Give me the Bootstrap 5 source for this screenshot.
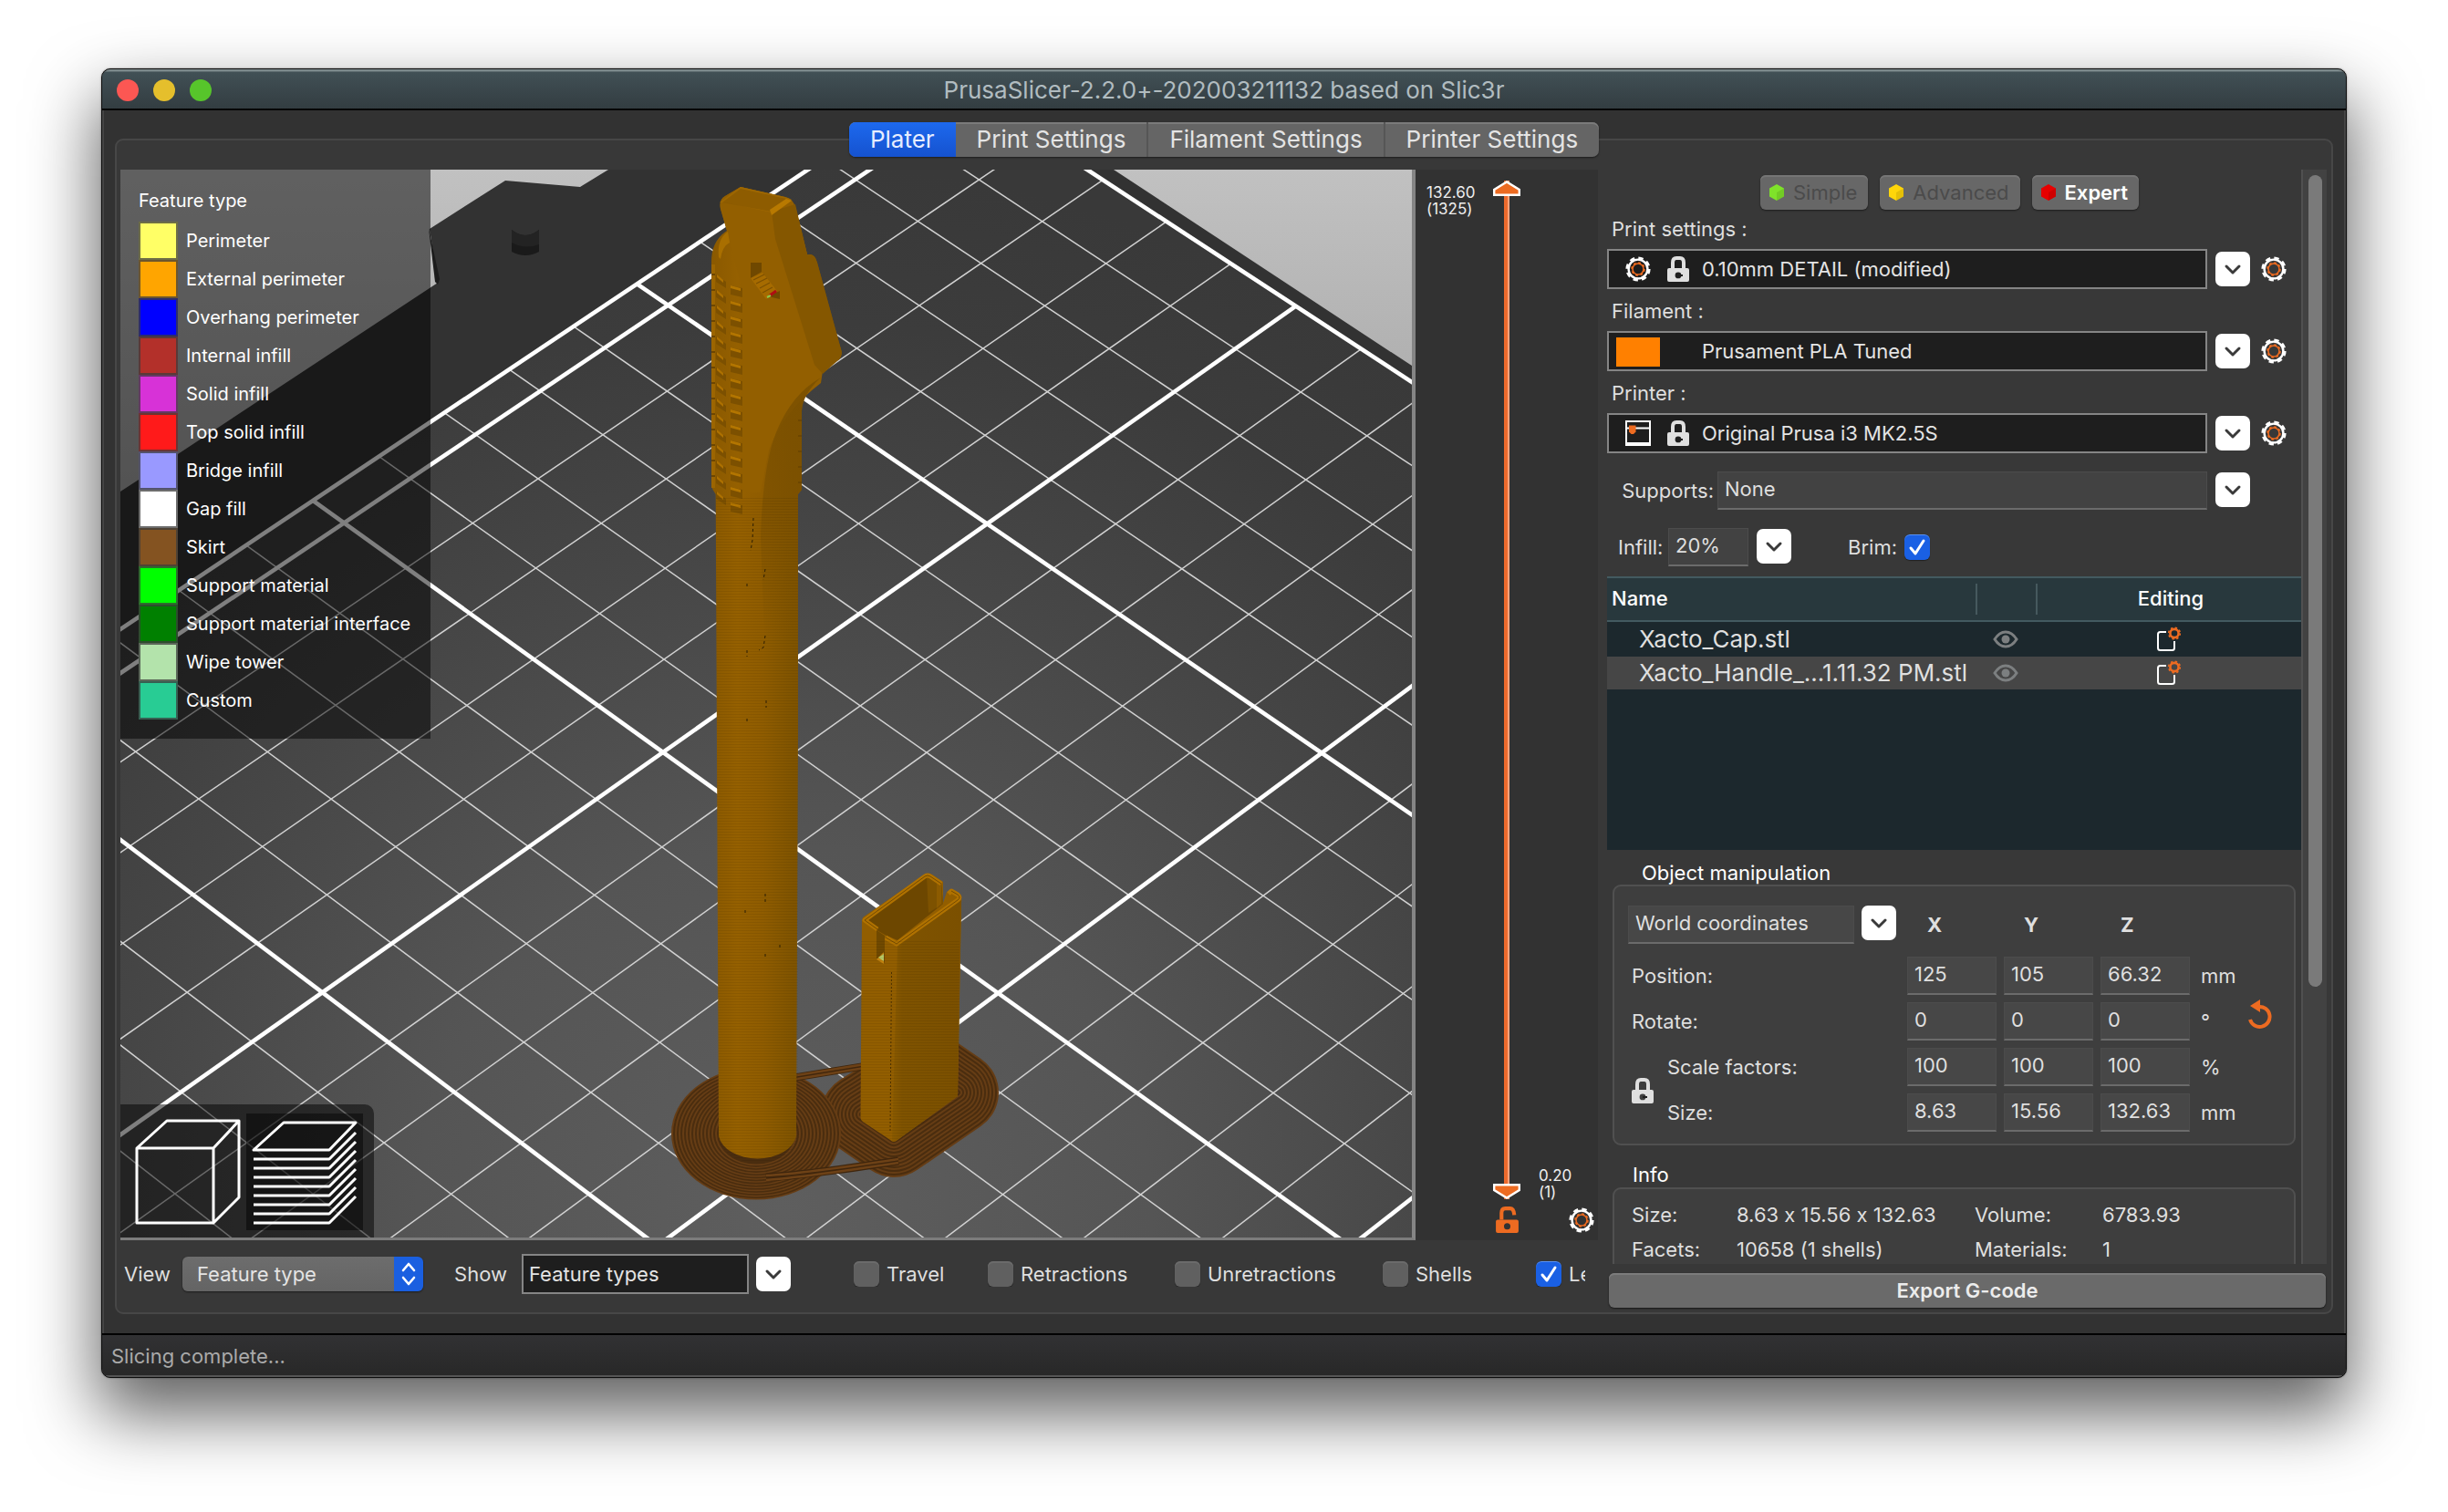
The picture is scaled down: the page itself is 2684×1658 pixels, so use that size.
<!DOCTYPE html>
<html lang="en" data-bs-theme="dark">
<head>
<meta charset="utf-8">
<meta name="viewport" content="width=device-width, initial-scale=1">
<title>PrusaSlicer</title>
<link href="https://cdn.jsdelivr.net/npm/bootstrap@5.3.0/dist/css/bootstrap.min.css" rel="stylesheet">
<style>
:root{--orange:#ed6b21;--ink:#dfdfdf;--base:22px;--big:26px}
body{background:#fff;font-family:Inter,"Noto Sans",sans-serif;font-variant-ligatures:no-contextual;font-size:var(--base);line-height:26px;color:var(--ink);padding:75px 111px 147px;min-height:100vh}
label,button,select,input{font-size:inherit;font-variant-ligatures:inherit}
.app-window{background:#323232;border:1px solid #0c0c0c;border-radius:10px;overflow:hidden;box-shadow:0 0 2px rgba(0,0,0,.5),0 36px 74px 4px rgba(0,0,0,.62),inset 0 0 0 2px #555}
.titlebar{height:45px;padding-top:2px;background:linear-gradient(#7d8a8c 0,#7d8a8c 2px,#415055 3px,#333d41);border-bottom:2px solid #050505}
.titlebar h1{font-size:var(--big);font-weight:400;color:#b1bcc0}
.lights{width:130px;padding-left:16px;gap:16px}
.lights button{width:24px;height:24px;border:0;border-radius:50%;padding:0}
.l-red{background:#fc5753}.l-yellow{background:#e5bf2c}.l-green{background:#57c52b}
.work{padding:13px 12px 21px;border-left:2px solid #454545;border-right:2px solid #454545;margin:0}
.tabs-bar{height:38px;margin-bottom:-20px;z-index:2}
.tabs-bar ul{background:#656565;border-radius:7px;overflow:hidden;box-shadow:0 1px 2px rgba(0,0,0,.5),inset 0 2px 0 #7b7b7b}
.tabs-bar .nav-link{padding:0 23px;line-height:38px;font-size:var(--big);color:#e4e4e4;border-radius:0}
.tabs-bar li+li+li{border-left:2px solid #565656}
.tabs-bar .nav-link.active{background:linear-gradient(#1d69ee,#1552cf);color:#e6edff}
.main-panel{background:#383838;border:2px solid #474747;border-radius:9px;padding:32px 5px 5px 4px;min-height:0}
.min0{min-height:0;min-width:0}
.view3d{background:linear-gradient(#c1c1c1,#a4a4a4 380px,#999);border-right:4px solid #858585;border-bottom:3px solid #7c7c7c}
.scene{position:absolute;inset:0;width:100%;height:100%}
.legend-box{position:absolute;left:0;top:0;width:340px;height:624px;background:rgba(0,0,0,.5);padding:20px 20px 0;color:#fff;font-size:20px}
.legend-box h2{font-size:20px;line-height:28px;font-weight:400;margin:0 0 9px}
.legend-box li{height:42px;gap:9px}
.swatch{width:43px;height:42px;border:2px solid rgba(60,60,60,.75)}
.mode3d{position:absolute;left:0;bottom:-3px;width:278px;height:149px;background:rgba(0,0,0,.5);border-top-right-radius:10px;padding:10px}
.mode3d button{border:0;padding:0;background:none;width:128px;height:128px}
.mode3d button.active{background:rgba(0,0,0,.45)}
.slider-panel{width:200px;background:#323232;font-size:17px;line-height:18px;color:#eee}
.dual{width:30px;container-type:size;position:relative}
.dual input{position:absolute;left:0;top:100%;width:100cqh;height:30px;margin:0;transform-origin:0 0;transform:rotate(-90deg);appearance:none;-webkit-appearance:none;background:none;pointer-events:none}
.dual .hi{background:linear-gradient(#ee6a2c 0,#ee6a2c 4px,#ffa37c 4px) 0 12px/100% 6px no-repeat}
.dual input::-webkit-slider-thumb{-webkit-appearance:none;width:17px;height:30px;pointer-events:auto;background:url("data:image/svg+xml,%3Csvg xmlns='http://www.w3.org/2000/svg' viewBox='0 0 17 30'%3E%3Cpath d='M1.2 1.2H7L15.5 15L7 28.8H1.2Z' fill='%23ed6b21' stroke='white' stroke-width='2.4'/%3E%3C/svg%3E")}
.dual .lo::-webkit-slider-thumb{background-image:url("data:image/svg+xml,%3Csvg xmlns='http://www.w3.org/2000/svg' viewBox='0 0 17 30'%3E%3Cpath d='M15.8 1.2H10L1.5 15L10 28.8H15.8Z' fill='%23ed6b21' stroke='white' stroke-width='2.4'/%3E%3C/svg%3E")}
.ico-btn{border:0;background:none;padding:0;line-height:0}
.toolbar-row{height:74px;padding:0 0 0 4px}
.pop-select{width:264px;height:38px;border-radius:6px;border:0;padding:0 16px;line-height:36px;color:#e4e4e4;appearance:none;background:url("data:image/svg+xml,%3Csvg xmlns='http://www.w3.org/2000/svg' viewBox='0 0 32 38'%3E%3Cpath d='M0 0H32V38H0Z' fill='%231a5fe0'/%3E%3Cpath d='M10 15L16 8L22 15M10 23L16 30L22 23' fill='none' stroke='white' stroke-width='2.6' stroke-linecap='round' stroke-linejoin='round'/%3E%3C/svg%3E") right/32px 38px no-repeat,linear-gradient(#6d6d6d,#646464);box-shadow:0 1px 2px rgba(0,0,0,.5)}
.dark-box{height:44px;background:#1e1e1e;border:2px solid #858585;border-radius:0;color:#e4e4e4;appearance:none;padding:0 6px;line-height:38px}
.drop{width:38px;height:38px;border:0;border-radius:7px;background:#fff;padding:0;line-height:0;flex:none}
.checks{display:grid;grid-template-columns:147px 205px 228px 168px 1fr;overflow:hidden;width:802px;margin-right:14px}
.checks .form-check{padding:0;margin:0;gap:8px;white-space:nowrap}
.app-window .form-check-input{width:28px;height:28px;margin:0;float:none;flex:none;border:0;border-radius:6px;background-color:#606060;box-shadow:0 1px 1px rgba(0,0,0,.4),inset 0 2px 0 #6b6b6b}
.app-window .form-check-input:checked{background:#1a60e4 url("data:image/svg+xml,%3Csvg xmlns='http://www.w3.org/2000/svg' viewBox='0 0 28 28'%3E%3Cpath d='M7 15L12 21L21 7' fill='none' stroke='white' stroke-width='3' stroke-linecap='round' stroke-linejoin='round'/%3E%3C/svg%3E") center/28px no-repeat;box-shadow:0 1px 1px rgba(0,0,0,.4),inset 0 1px 0 #5a92f2}
.side{width:799px;flex:none}
.side-scroll{overflow:hidden}
.side-body{padding:6px 0 0 10px;width:771px}
.bar-track{width:28px;background:#424242;border-left:2px solid #505050;padding:6px 5px 0 6px}
.bar-thumb{height:890px;border-radius:9px;background:#7a7a7a}
.modes{height:37px;gap:13px;padding-right:10px}
.modes button{height:38px;border:0;border-radius:6px;background:#676767;padding:0 12px 0 9px;gap:9px;color:#4b4b4b;box-shadow:0 1px 2px rgba(0,0,0,.5),inset 0 2px 0 #757575}
.modes button.active{color:#fff;font-weight:600}
.preset-label{height:44px;line-height:44px;padding-left:5px}
.preset{gap:9px;margin-bottom:2px}
.preset .wrap{width:658px;position:relative}
.preset .dark-box{width:100%;padding-left:102px}
.preset .deco{position:absolute;left:20px;top:8px;gap:16px;pointer-events:none}
.preset .deco-swatch{position:absolute;left:10px;top:7px;width:48px;height:32px;background:#ff8000;pointer-events:none}
.preset .ico-btn{margin-left:3px}
.flat{height:42px;background:#424242;border:1px solid #4c4c4c;border-bottom:2px solid #6b6b6b;border-radius:0;color:var(--ink);appearance:none;padding:0 7px 4px;line-height:34px}
.opt-row{height:42px;margin-top:20px}
.opt-row .drop{margin:1px 0 0 9px}
.objs{height:300px;background:#1c282d;margin-top:11px}
.objs table{width:100%;table-layout:fixed;border-collapse:separate;border-spacing:0}
.objs th{height:50px;background:#28383d;border-top:2px solid #435a60;border-bottom:2px solid #435a60;color:#fff;font-weight:500;padding:0 0 3px 5px}
.objs th+th{background:linear-gradient(#46595e,#46595e) 0 6px/2px 34px no-repeat #28383d}
.objs td{height:38px;padding:0;font-size:var(--big);line-height:36px}
.objs td:first-child{padding-left:35px;white-space:nowrap}
.objs tr.picked td{height:36px;background:#464646}
.objs td svg{display:block;margin:0 auto}
.box{background:#3e3e3e;border:2px solid #505050;border-radius:9px;margin:0 6px;padding:21px 15px 13px}
.box-title{height:38px;padding:12px 0 0 38px;font-size:inherit;line-height:26px;margin:0;font-weight:400}
.box-title.second{height:46px;padding:19px 0 0 28px}
.manip{display:grid;grid-template-columns:43px 263px 106px 106px 106px 1fr;grid-template-rows:42px;grid-auto-rows:42px;row-gap:8px;align-items:center}
.manip .flat{background:#474747;width:98px}
.axis{padding-left:22px;font-weight:700;align-self:center}
.unit{padding-left:4px}
.info-grid{display:grid;grid-template-columns:115px 261px 140px 1fr;row-gap:12px;margin:0;padding-left:4px;width:700px;font-weight:400}
.info-grid dt{font-weight:400}.info-grid dd{margin:0;white-space:nowrap}
.export{height:38px;margin:10px 1px 0 12px;border:0;border-radius:6px;background:#6a6a6a;color:#ececec;font-weight:600;box-shadow:0 1px 2px rgba(0,0,0,.6),inset 0 2px 0 #7c7c7c}
.statusbar{height:48px;border-top:2px solid #000;background:linear-gradient(#313133,#282828);border-bottom:2px solid #555;color:#aaa;padding:2px 10px 0}
</style>
</head>
<body class="d-flex">
<svg width="0" height="0" class="position-absolute" aria-hidden="true">
<defs>
<symbol id="gear" viewBox="0 0 28 28"><circle cx="14" cy="14" r="11.6" fill="none" stroke="#fff" stroke-width="4" stroke-dasharray="5.1 4.01"/><circle cx="14" cy="14" r="10.4" fill="none" stroke="#fff" stroke-width="2.4"/><circle cx="14" cy="14" r="6" fill="none" stroke="#ed6b21" stroke-width="1.6"/><circle cx="14" cy="14" r="7" fill="none" stroke="#ed6b21" stroke-width="1.6" stroke-dasharray="2.75 2.75"/></symbol>
<symbol id="lock" viewBox="0 0 24 28"><path d="M6 13V7Q6 2 10 2H14Q18 2 18 7V13" fill="none" stroke="currentColor" stroke-width="4"/><path fill-rule="evenodd" fill="currentColor" d="M2 13H22Q24 13 24 15V26Q24 28 22 28H2Q0 28 0 26V15Q0 13 2 13ZM12 17.5A3.4 3.4 0 1 0 12 24.3A3.4 3.4 0 1 0 12 17.5Z"/><path d="M12 20H17V22H12Z" fill="#1e1e1e"/></symbol>
<symbol id="unlock" viewBox="0 0 24 28"><path d="M6 14V7Q6 2 10 2H15Q19 2 19.500 9" fill="none" stroke="currentColor" stroke-width="4"/><path fill-rule="evenodd" fill="currentColor" d="M2 14H22Q24 14 24 16V26Q24 28 22 28H2Q0 28 0 26V16Q0 14 2 14ZM12 17.500A3.400 3.400 0 1 0 12 24.300A3.400 3.400 0 1 0 12 17.500Z"/></symbol>
<symbol id="printer" viewBox="0 0 28 28"><path d="M1 1H27V27H1Z M1 8.500H27" fill="none" stroke="#fff" stroke-width="2"/><path d="M0 24H28V28H0Z" fill="#fff"/><path d="M4 5.500H11.500V12.500L9 15H6.500L4 12.500Z" fill="#ed6b21"/></symbol>
<symbol id="chev" viewBox="0 0 38 38"><path d="M12 16L19 23L26 16" fill="none" stroke="#3a3a3a" stroke-width="3" stroke-linecap="round" stroke-linejoin="round"/></symbol>
<symbol id="eye" viewBox="0 0 28 20"><path d="M2 10Q7 2 14 2T26 10Q21 18 14 18T2 10Z" fill="none" stroke="#7c7f80" stroke-width="3"/><circle cx="14" cy="10" r="4.500" fill="#7c7f80"/></symbol>
<symbol id="edit" viewBox="0 0 28 28"><path d="M11 6H4.500Q2 6 2 8.500V23.500Q2 26 4.500 26H17.500Q20 26 20 23.500V16" fill="none" stroke="#fff" stroke-width="2"/><circle cx="20" cy="7.500" r="4.600" fill="none" stroke="#ed6b21" stroke-width="2.600"/><circle cx="20" cy="7.500" r="6.300" fill="none" stroke="#ed6b21" stroke-width="1.600" stroke-dasharray="2.400 2.550"/></symbol>
<symbol id="hex" viewBox="0 0 18 20"><path d="M9 1L17 5.500V14.500L9 19L1 14.500V5.500Z" fill="currentColor"/><path d="M9 10L17 5.500V14.500L9 19Z" fill="#000" opacity=".1"/></symbol>
</defs>
</svg>

<div class="app-window d-flex flex-column flex-grow-1 min0">
  <header class="titlebar d-flex align-items-center flex-shrink-0">
    <div class="lights d-flex">
      <button class="l-red" aria-label="Close"></button><button class="l-yellow" aria-label="Minimize"></button><button class="l-green" aria-label="Zoom"></button>
    </div>
    <h1 class="flex-grow-1 text-center m-0">PrusaSlicer-2.2.0+-202003211132 based on Slic3r</h1>
    <div class="lights"></div>
  </header>

  <main class="work d-flex flex-column flex-grow-1 min0">
    <nav class="tabs-bar d-flex justify-content-center position-relative flex-shrink-0">
      <ul class="nav flex-nowrap">
        <li class="nav-item"><a class="nav-link active" href="#plater">Plater</a></li>
        <li class="nav-item"><a class="nav-link" href="#print">Print Settings</a></li>
        <li class="nav-item"><a class="nav-link" href="#filament">Filament Settings</a></li>
        <li class="nav-item"><a class="nav-link" href="#printer-settings">Printer Settings</a></li>
      </ul>
    </nav>

    <div class="main-panel d-flex flex-grow-1" id="plater">
      <section class="d-flex flex-column flex-grow-1 min0">
        <div class="d-flex flex-grow-1 min0">
          <div class="view3d position-relative flex-grow-1 overflow-hidden">
            <svg class="scene" viewBox="132 186 1416 1171" preserveAspectRatio="xMidYMid slice" role="img" aria-label="Toolpath preview">
              <defs>
                <radialGradient id="bedFill" gradientUnits="userSpaceOnUse" cx="860" cy="1330" r="1150"><stop offset="0" stop-color="#5e5e5e"/><stop offset=".35" stop-color="#555"/><stop offset=".62" stop-color="#474747"/><stop offset=".85" stop-color="#3c3c3c"/><stop offset="1" stop-color="#393939"/></radialGradient>
                <linearGradient id="tube" x1="0" x2="1" y1="0" y2="0"><stop offset="0" stop-color="#8a5900"/><stop offset=".2" stop-color="#956000"/><stop offset=".4" stop-color="#8f5c00"/><stop offset=".62" stop-color="#805400"/><stop offset="1" stop-color="#785000"/></linearGradient>
                <linearGradient id="side" x1="0" x2="1" y1="0" y2="0"><stop offset="0" stop-color="#8a5a00"/><stop offset=".15" stop-color="#7f5300"/><stop offset="1" stop-color="#7b5000"/></linearGradient>
                <linearGradient id="scoop" x1="0" x2="0" y1="0" y2="1"><stop offset="0" stop-color="#7b5000" stop-opacity=".9"/><stop offset=".5" stop-color="#7b5000" stop-opacity=".7"/><stop offset="1" stop-color="#7b5000" stop-opacity="0"/></linearGradient>
                <pattern id="ribs" width="13" height="17" patternUnits="userSpaceOnUse" x="801" y="313"><path d="M0 0L13 3V13L0 10Z" fill="#7c5000"/><path d="M0 0L11 3V6L0 3Z" fill="#b37500"/></pattern>
                <pattern id="ribs2" width="12" height="17" patternUnits="userSpaceOnUse" x="785" y="301"><path d="M0 0L11 8V15L0 8Z" fill="#7c5000"/><path d="M1 0L8 6V9L1 3Z" fill="#ad7000"/></pattern>
                <pattern id="layers" width="4" height="3" patternUnits="userSpaceOnUse"><path d="M0 0H4V1H0Z" fill="#000" opacity=".07"/></pattern>
              </defs>
              <path d="M132 539L198 496L480 310L471 251L554 198L636 205L667 186L700 150H1190L1221 186L1560 409V1370H132Z" fill="#323232"/>
              <path d="M470 250L482 306L480 312L477 309Z" fill="#1c1c1c"/>
              <path d="M561 252Q576 264 591 252V276Q576 284 561 276Z" fill="#1a1a1a"/><path d="M561 252Q576 264 591 252V268Q576 274 561 266Z" fill="#232323"/>
              <g id="grid"></g>
              <g id="brim"></g>
              <path d="M812 205L861 216Q869 218 872 227L885 279L889 279Q894 280 896 288L922 383Q924 390 920 394Q894 408 884 433Q879 442 879 451V537L875 542V800L873 1246A43 29 0 0 1 788 1246L784.700 542L781 536L780 287Q780 264 797 253L790 229Q788 219 795 215Z" fill="url(#tube)"/>
              <path d="M790 229Q788 219 795 215L812 205L861 216Q869 218 872 227L885 279L922 383Q924 390 920 394L902 407L900 420Q858 452 843 494L834 540L812 540Q815 420 812 310L797 253Z" fill="#935f00"/>
              <path d="M846 232L872 224L885 279L889 279Q894 280 896 288L922 383Q924 390 920 394L902 410L893 400L850 262Z" fill="#855700"/>
              <path d="M789 222L812 205L864 217L868 219L846 233L795 222Z" fill="#9e6700"/><path d="M792 222L812 207L862 218L846 232Z" fill="#7e5200" opacity=".5"/>
              <path d="M844 230L862 218L868 220L846 236Z" fill="#b87900"/>
              <path d="M900 414Q868 432 851 474Q836 512 834 590L838 700L875 700V542L879 537V451Q880 432 900 414Z" fill="url(#scoop)"/>
              <path d="M801 313H814V565H801Z" fill="url(#ribs)"/><path d="M785 300H797V555H785Z" fill="url(#ribs2)"/>
              <path d="M780 290H784V535H780Z" fill="#9c6500"/><path d="M782 300V535M877 460V536" stroke="#6d4600" stroke-width="4" stroke-dasharray="2 15" fill="none"/>
              <path d="M788 282Q786 262 798 254L800 266Q792 270 790 284Z" fill="#a96f00"/>
              <path d="M823 288H835V298L823 305Z" fill="#6f4800"/><path d="M823 305L836 299L852 319L840 328Z" fill="#a66b00"/><path d="M826 307L838 301M829 311L841 305M833 316L844 310M836 321L847 315" stroke="#7c5000" stroke-width="1.200"/><path d="M842 325L855 319V328Z" fill="#6f4800"/><path d="M844 324L851 319" stroke="#b00d12" stroke-width="3"/><path d="M841 326L845 324" stroke="#8fc94a" stroke-width="2"/>
              <path d="M826 568L825 592L823 604M839 624L837 636M819 640V646M839 697L837 710L832 713M819 713V720M840 768V776M819 788V793M839 980V990M817 998V1003M855 1036V1040M839 1046V1052" stroke="#2c1e04" stroke-width="1" stroke-dasharray="3 3" fill="none"/>
              <path d="M785 545H875V1246A43 29 0 0 1 788 1246Z" fill="url(#layers)"/>
              <path d="M946 1006L1012 960Q1017 956 1022 959L1034 967L1034 990L1038 978L1043 975L1052 981Q1055 984 1054 990L1050 1202L984 1250Q980 1254 976 1250L946 1230Q943 1228 943.500 1224L945 1010Z" fill="#925e00"/>
              <path d="M984 1036L1054 986L1050 1202L984 1250Q980 1252 978 1251Z" fill="url(#side)"/>
              <path d="M950 1009L1016 961L1032 969L1034 991L984 1031L972 1026L963 1021Z" fill="#6d4700"/><path d="M1016 961L1032 969L1034 991L1018 1001Z" fill="#7d5200"/><path d="M1027 968L1032 970V991L1027 996Z" fill="#8c5b00"/>
              <path d="M962 1019L948 1009L1014 961Q1017 959 1020 961L1032 969" fill="none" stroke="#b07200" stroke-width="5" stroke-linejoin="round"/><path d="M962 1019L948 1009L1014 961Q1017 959 1020 961L1032 969" fill="none" stroke="#754b00" stroke-width="1"/>
              <path d="M971 1028L983 1035L1050 987Q1054 984 1050 981L1043 977L1040 980" fill="none" stroke="#b07200" stroke-width="5" stroke-linejoin="round"/><path d="M971 1028L983 1035L1050 987Q1054 984 1050 981L1043 977" fill="none" stroke="#754b00" stroke-width="1"/>
              <path d="M961 1020L970 1026V1056L961 1051Z" fill="#704900"/><path d="M961 1052L969 1044V1057Z" fill="#c28310"/><path d="M963 1050L969 1046V1054Z" fill="#b6c864"/>
              <path d="M977.500 1066L976 1240" stroke="#4b3000" stroke-width="1" stroke-dasharray="2 2"/>
              <path d="M944 1030H1052V1205L980 1252L944 1228Z" fill="url(#layers)"/>
            </svg>

            <div class="legend-box">
              <h2>Feature type</h2>
              <ul class="list-unstyled m-0" id="legend"></ul>
            </div>

            <div class="mode3d d-flex">
              <button aria-label="3D editor view"><svg width="128" height="128" viewBox="142 1222 128 128" fill="none" stroke="#fff" stroke-width="3" stroke-linejoin="round"><path d="M150 1260H234V1342H150ZM150 1260L183 1230H262V1314L234 1342M234 1260L262 1230"/></svg></button>
              <button class="active" aria-label="Preview"><svg id="layersIcon" width="128" height="128" viewBox="272 1222 128 128" fill="none" stroke="#fff" stroke-width="3" stroke-linejoin="round"><path d="M280 1262L313 1232H392L363 1262Z"/></svg></button>
            </div>
          </div>

          <div class="slider-panel d-flex flex-shrink-0">
            <div class="ps-2 ms-1 pt-3" style="width:81px"><div>132.60<br>(1325)</div></div>
            <div class="d-flex flex-column align-items-center pt-2">
              <div class="dual flex-grow-1 mt-1 mb-2">
                <input type="range" class="hi" min="1" max="1325" value="1325" aria-label="Top layer">
                <input type="range" class="lo" min="1" max="1325" value="1" aria-label="Bottom layer">
              </div>
              <button class="ico-btn mb-2" aria-label="Unlock range" style="color:var(--orange)"><svg width="25" height="29"><use href="#unlock"/></svg></button>
            </div>
            <div class="d-flex flex-column justify-content-end flex-grow-1 ps-3 ms-1">
              <div class="mb-2">0.20<br>(1)</div>
              <button class="ico-btn mb-2 align-self-end me-1" aria-label="Slider settings"><svg width="28" height="28"><use href="#gear"/></svg></button>
            </div>
          </div>
        </div>

        <div class="toolbar-row d-flex align-items-center flex-shrink-0">
          <label for="viewSel" style="width:64px">View</label>
          <select id="viewSel" class="pop-select"><option>Feature type</option></select>
          <label for="showSel" class="text-end pe-3" style="width:108px">Show</label>
          <select id="showSel" class="dark-box" style="width:249px"><option>Feature types</option></select>
          <button class="drop ms-2" aria-label="Open list"><svg width="38" height="38"><use href="#chev"/></svg></button>
          <div class="checks ms-auto">
            <div class="form-check d-flex align-items-center"><input class="form-check-input" type="checkbox" id="c1"><label for="c1">Travel</label></div>
            <div class="form-check d-flex align-items-center"><input class="form-check-input" type="checkbox" id="c2"><label for="c2">Retractions</label></div>
            <div class="form-check d-flex align-items-center"><input class="form-check-input" type="checkbox" id="c3"><label for="c3">Unretractions</label></div>
            <div class="form-check d-flex align-items-center"><input class="form-check-input" type="checkbox" id="c4"><label for="c4">Shells</label></div>
            <div class="form-check d-flex align-items-center overflow-hidden"><input class="form-check-input" type="checkbox" id="c5" checked><label for="c5">Legend</label></div>
          </div>
        </div>
      </section>

      <aside class="side d-flex flex-column">
        <div class="side-scroll d-flex flex-grow-1 min0" style="flex-basis:0">
          <div class="side-body">
            <div class="modes d-flex justify-content-center">
              <button class="d-flex align-items-center"><svg width="18" height="20" style="color:#7fe22a"><use href="#hex"/></svg>Simple</button>
              <button class="d-flex align-items-center"><svg width="18" height="20" style="color:#ffd60a"><use href="#hex"/></svg>Advanced</button>
              <button class="d-flex align-items-center active"><svg width="18" height="20" style="color:#e70000"><use href="#hex"/></svg>Expert</button>
            </div>

            <label class="preset-label d-block" for="pPrint">Print settings :</label>
            <div class="preset d-flex align-items-center">
              <div class="wrap"><select id="pPrint" class="dark-box"><option>0.10mm DETAIL (modified)</option></select>
                <span class="deco d-flex"><svg width="28" height="28"><use href="#gear"/></svg><svg width="28" height="28"><use href="#lock"/></svg></span></div>
              <button class="drop" aria-label="Open print presets"><svg width="38" height="38"><use href="#chev"/></svg></button>
              <button class="ico-btn" aria-label="Edit print preset"><svg width="28" height="28"><use href="#gear"/></svg></button>
            </div>
            <label class="preset-label d-block" for="pFil">Filament :</label>
            <div class="preset d-flex align-items-center">
              <div class="wrap"><select id="pFil" class="dark-box"><option>Prusament PLA Tuned</option></select><span class="deco-swatch"></span></div>
              <button class="drop" aria-label="Open filament presets"><svg width="38" height="38"><use href="#chev"/></svg></button>
              <button class="ico-btn" aria-label="Edit filament preset"><svg width="28" height="28"><use href="#gear"/></svg></button>
            </div>
            <label class="preset-label d-block" for="pPrn">Printer :</label>
            <div class="preset d-flex align-items-center">
              <div class="wrap"><select id="pPrn" class="dark-box"><option>Original Prusa i3 MK2.5S</option></select>
                <span class="deco d-flex"><svg width="28" height="28"><use href="#printer"/></svg><svg width="28" height="28"><use href="#lock"/></svg></span></div>
              <button class="drop" aria-label="Open printer presets"><svg width="38" height="38"><use href="#chev"/></svg></button>
              <button class="ico-btn" aria-label="Edit printer preset"><svg width="28" height="28"><use href="#gear"/></svg></button>
            </div>

            <div class="opt-row d-flex">
              <label for="sup" class="align-self-center text-end pe-1" style="width:121px">Supports:</label>
              <select id="sup" class="flat" style="width:537px"><option>None</option></select>
              <button class="drop" aria-label="Open supports"><svg width="38" height="38"><use href="#chev"/></svg></button>
            </div>
            <div class="opt-row d-flex">
              <label for="inf" class="align-self-center ps-1 ms-2" style="width:59px">Infill:</label>
              <select id="inf" class="flat" style="width:88px"><option>20%</option></select>
              <button class="drop" aria-label="Open infill"><svg width="38" height="38"><use href="#chev"/></svg></button>
              <label for="brimBox" class="align-self-center text-end pe-2" style="width:124px">Brim:</label>
              <input class="form-check-input align-self-center" type="checkbox" id="brimBox" checked>
            </div>

            <div class="objs">
              <table>
                <colgroup><col style="width:404px"><col style="width:66px"><col></colgroup>
                <thead><tr><th>Name</th><th></th><th class="text-center">Editing</th></tr></thead>
                <tbody>
                  <tr><td>Xacto_Cap.stl</td><td><svg width="28" height="20"><use href="#eye"/></svg></td><td><svg width="28" height="28"><use href="#edit"/></svg></td></tr>
                  <tr class="picked"><td>Xacto_Handle_...1.11.32 PM.stl</td><td><svg width="28" height="20"><use href="#eye"/></svg></td><td><svg width="28" height="28"><use href="#edit"/></svg></td></tr>
                </tbody>
              </table>
            </div>

            <h2 class="box-title">Object manipulation</h2>
            <div class="box">
              <div class="manip" style="margin-bottom:14px">
                <div class="d-flex" style="grid-column:span 2"><select class="flat" style="width:248px" aria-label="Coordinates"><option>World coordinates</option></select><button class="drop ms-2 mt-0" aria-label="Open coordinates"><svg width="38" height="38"><use href="#chev"/></svg></button></div>
                <span class="axis">X</span><span class="axis">Y</span><span class="axis">Z</span><span></span>
              </div>
              <div class="manip">
                <label for="px" class="ps-1" style="grid-column:span 2">Position:</label><input id="px" class="flat" value="125"><input class="flat" value="105" aria-label="Position Y"><input class="flat" value="66.32" aria-label="Position Z"><span class="unit">mm</span>
                <label for="rx" class="ps-1" style="grid-column:span 2">Rotate:</label><input id="rx" class="flat" value="0"><input class="flat" value="0" aria-label="Rotate Y"><input class="flat" value="0" aria-label="Rotate Z"><span class="unit d-flex align-items-center justify-content-between pe-2"><span>°</span><button class="ico-btn pb-3" aria-label="Reset rotation"><svg width="28" height="32" viewBox="0 0 28 32"><path d="M3 22A11 11 0 1 0 12 8" fill="none" stroke="#ed6b21" stroke-width="4"/><path d="M3 7L14 0V14Z" fill="#ed6b21"/></svg></button></span>
                <span class="ps-1" style="grid-row:3/span 2"><svg width="24" height="28"><use href="#lock"/></svg></span>
                <label for="sx">Scale factors:</label><input id="sx" class="flat" value="100"><input class="flat" value="100" aria-label="Scale Y"><input class="flat" value="100" aria-label="Scale Z"><span class="unit">%</span>
                <label for="zx">Size:</label><input id="zx" class="flat" value="8.63"><input class="flat" value="15.56" aria-label="Size Y"><input class="flat" value="132.63" aria-label="Size Z"><span class="unit">mm</span>
              </div>
            </div>

            <h2 class="box-title second">Info</h2>
            <div class="box" style="padding-top:15px">
              <dl class="info-grid">
                <dt>Size:</dt><dd>8.63 x 15.56 x 132.63</dd><dt>Volume:</dt><dd>6783.93</dd>
                <dt>Facets:</dt><dd>10658 (1 shells)</dd><dt>Materials:</dt><dd>1</dd>
              </dl>
            </div>
          </div>
          <div class="bar-track"><div class="bar-thumb"></div></div>
        </div>
        <button class="export">Export G-code</button>
      </aside>
    </div>
  </main>

  <footer class="statusbar d-flex align-items-center flex-shrink-0">Slicing complete...</footer>
</div>

<script src="https://cdn.jsdelivr.net/npm/bootstrap@5.3.0/dist/js/bootstrap.bundle.min.js"></script>
<script>
const NS='http://www.w3.org/2000/svg';
function add(parent,tag,attrs){const e=document.createElementNS(NS,tag);for(const k in attrs)e.setAttribute(k,attrs[k]);parent.appendChild(e);return e}

// legend entries
[['#ffff66','Perimeter'],['#ffa500','External perimeter'],['#0000ff','Overhang perimeter'],['#b3302a','Internal infill'],['#d732d7','Solid infill'],['#ff1a1a','Top solid infill'],['#9999ff','Bridge infill'],['#ffffff','Gap fill'],['#845321','Skirt'],['#00ff00','Support material'],['#008000','Support material interface'],['#b3e3ab','Wipe tower'],['#28cc94','Custom']]
.forEach(([c,t])=>{const li=document.createElement('li');li.className='d-flex align-items-center';li.innerHTML='<span class="swatch" style="background:'+c+'"></span><span>'+t+'</span>';document.getElementById('legend').appendChild(li)});

// bed coordinates (10 mm cells) to view coordinates
const pts=[[0,0,732.5,334.7],[-5,5,1420.7,335.7],[10,5,353.4,1088.3],[5,10,1094.3,1089]];
const M=[];
pts.forEach(([u,v,x,y])=>{M.push([u,v,1,0,0,0,-u*x,-v*x,x]);M.push([0,0,0,u,v,1,-u*y,-v*y,y])});
for(let i=0;i<8;i++){let p=i;for(let r=i;r<8;r++)if(Math.abs(M[r][i])>Math.abs(M[p][i]))p=r;[M[i],M[p]]=[M[p],M[i]];for(let r=0;r<8;r++)if(r!==i){const f=M[r][i]/M[i][i];for(let c=i;c<9;c++)M[r][c]-=f*M[i][c]}}
const h=M.map((r,i)=>r[8]/r[i]);
const P=(u,v)=>{const w=h[6]*u+h[7]*v+1;return[(h[0]*u+h[1]*v+h[2])/w,(h[3]*u+h[4]*v+h[5])/w]};
const grid=document.getElementById('grid');
add(grid,'polygon',{points:[P(-5,-.5),P(20,-.5),P(20,20.5),P(-5,20.5)].join(' '),fill:'url(#bedFill)'});
function line(a,b,thick){add(grid,'line',{x1:a[0],y1:a[1],x2:b[0],y2:b[1],stroke:thick?'#fff':'#d2d2d2','stroke-width':thick?4.6:1.5})}
for(let u=-5;u<=20;u++)if(u%5)line(P(u,-.5),P(u,20.5),false);
for(let v=0;v<=20;v++)if(v%5)line(P(-5,v),P(20,v),false);
for(let u=-5;u<=20;u+=5)line(P(u,-.5),P(u,20.5),true);
for(let v=0;v<=20;v+=5)line(P(-5,v),P(20,v),true);
line(P(-5,-.5),P(20,-.5),true);

// brim rings round both parts
const brim=document.getElementById('brim');
for(let r=45,i=0;r>0;r-=2,i++)add(brim,'path',{d:'M945 1222L980 1246L1050 1198L1018 1176Z',fill:'none',stroke:i%2?'#4a2d0f':'#663d15','stroke-width':r*2,'stroke-linejoin':'round'});
add(brim,'path',{d:'M908 1216L914 1240',stroke:'#5a5a5a','stroke-width':3});
for(let r=93,i=0;r>42;r-=2,i++)add(brim,'ellipse',{cx:829,cy:1243,rx:r,ry:r*.78,fill:i%2?'#4a2d0f':'#663d15'});
for(const [d,w,c] of [['M868 1182L948 1169',8,'#3f260d'],['M868 1180L948 1167',2.5,'#6d4116'],['M868 1184L948 1171',2.5,'#6d4116'],['M840 1291Q880 1289 985 1273',9,'#3f260d'],['M840 1289Q880 1287 985 1271',2.5,'#6d4116'],['M840 1294Q880 1291 985 1275',2.5,'#6d4116']])add(brim,'path',{d,fill:'none',stroke:c,'stroke-width':w});

// stacked layers of the preview icon
const li=document.getElementById('layersIcon');
for(let i=0;i<8;i++){const y=1272+i*10;add(li,'path',{d:'M280 '+y+'H363L392 '+(y-29)})}
</script>
</body>
</html>
